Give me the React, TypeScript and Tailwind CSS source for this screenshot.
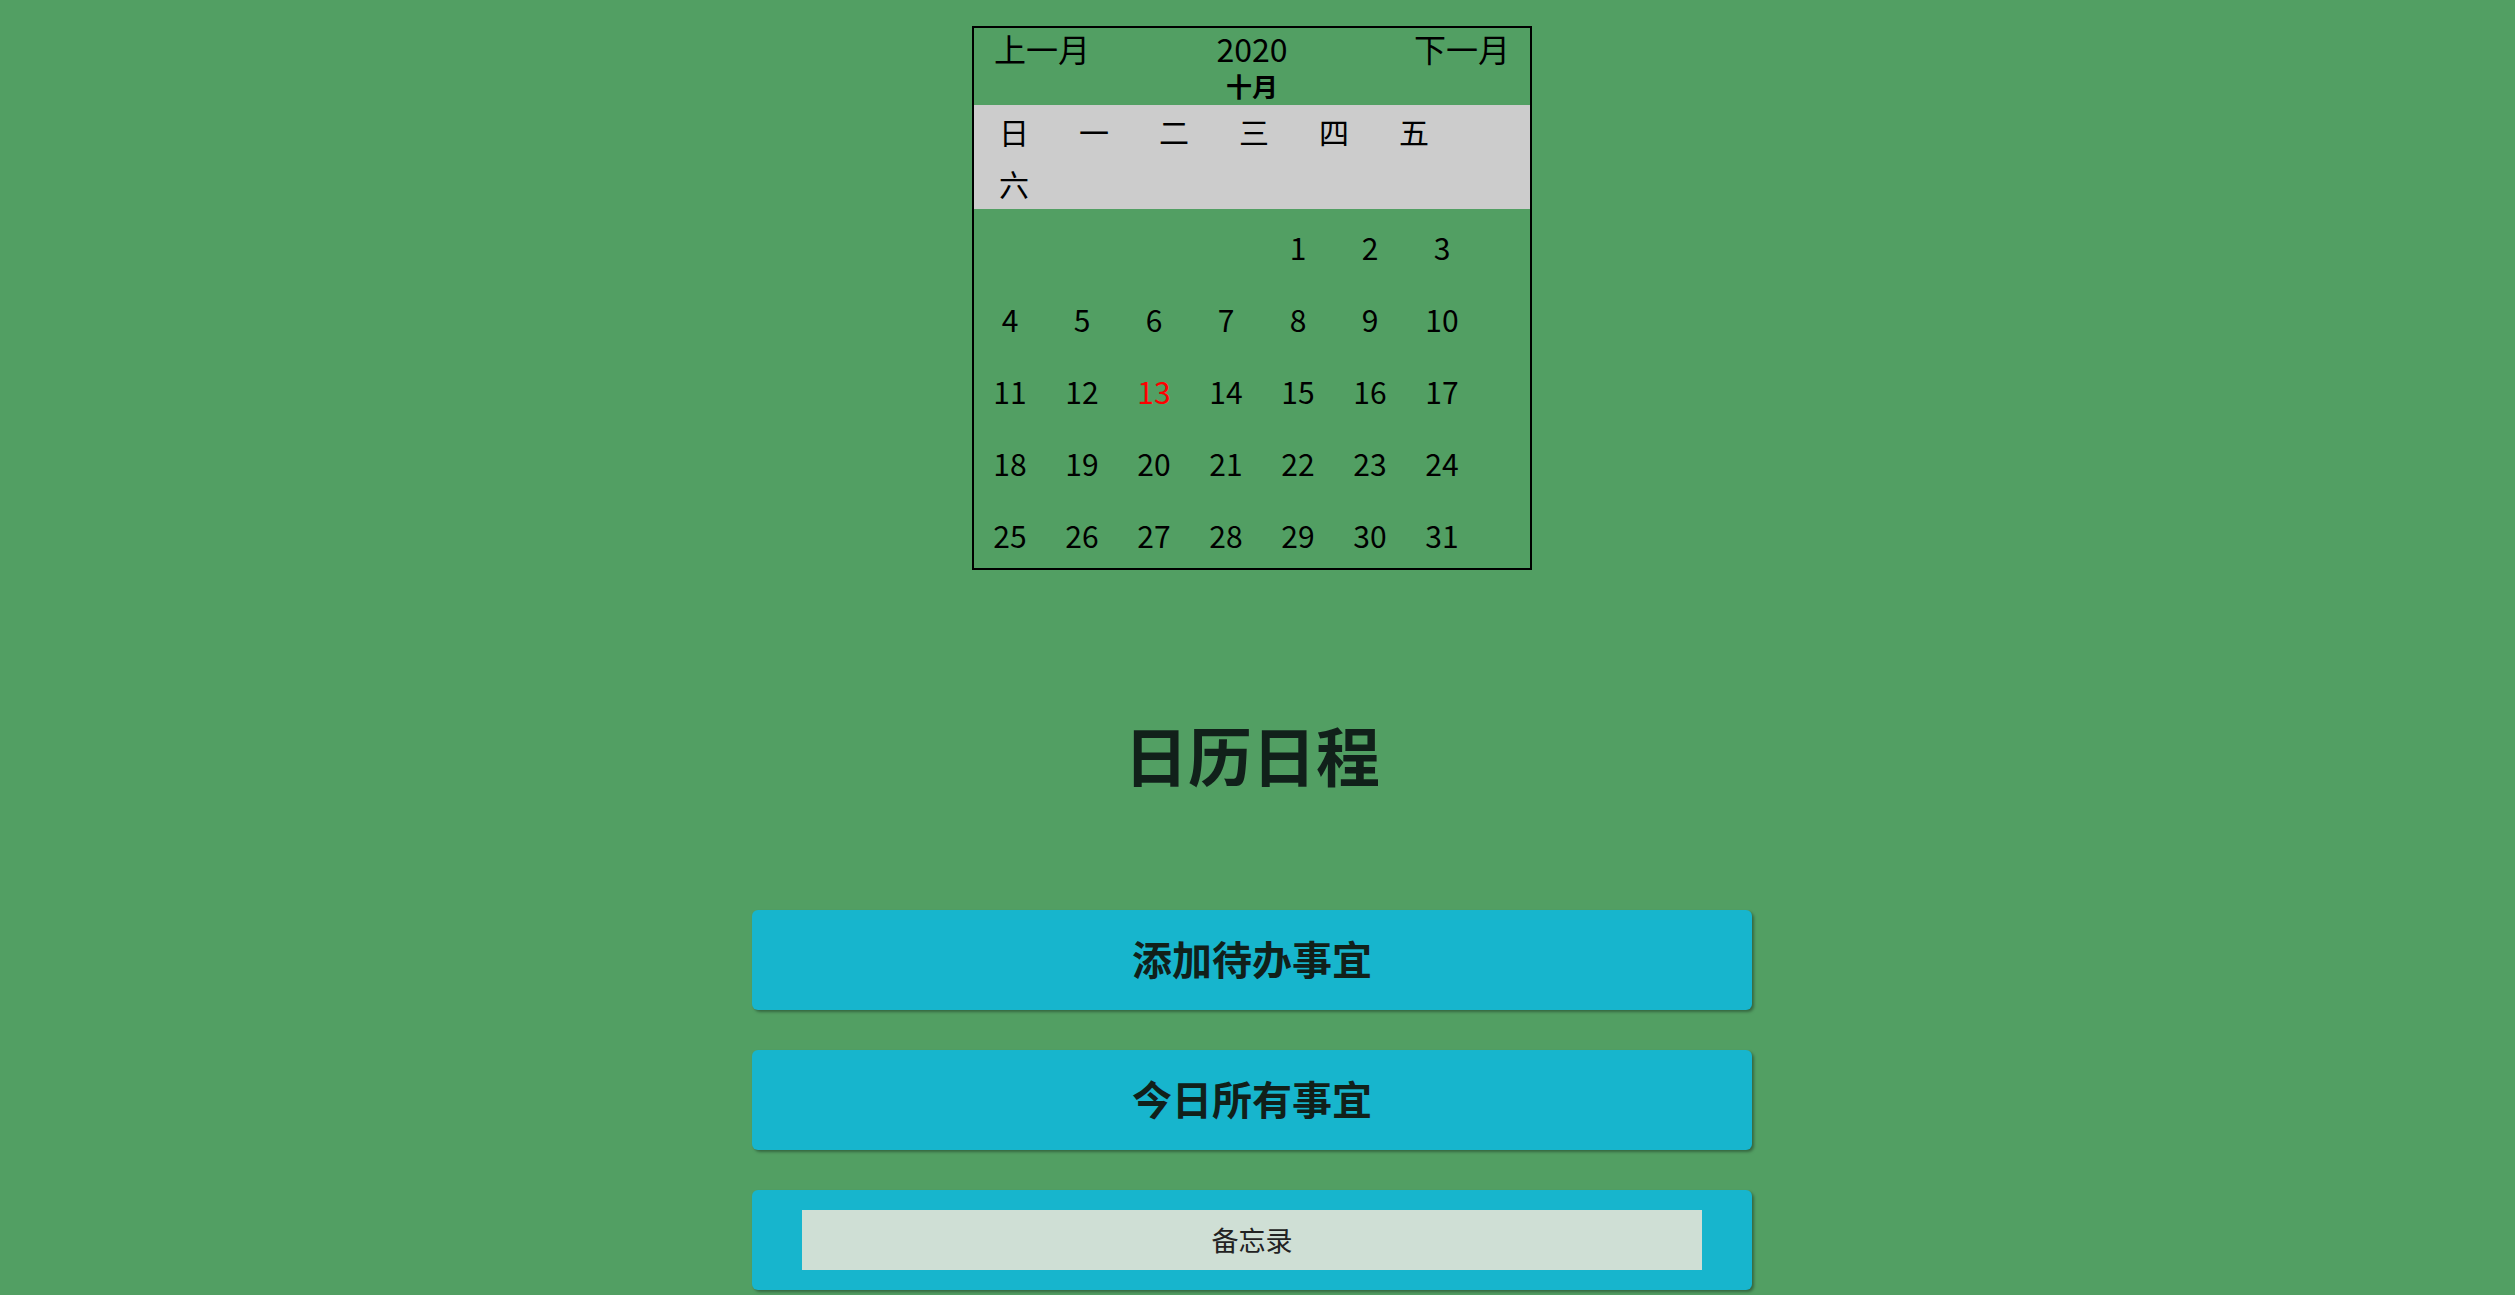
const weekdays = ["日", "一", "二", "三", "四", "五", "六"];

// October 2020 starts on Thursday
const cells: (number | null)[] = [null, null, null, null, ...Array.from({ length: 31 }, (_, i) => i + 1)];

const Calendar = () => {
    return (
        <div className="w-[560px] border-2 border-black text-black">
            <div className="h-[77px] px-[20px]">
                <div className="flex items-center justify-between h-[40px] text-[32px] leading-[40px]">
                    <a className="cursor-pointer">上一月</a>
                    <span>2020</span>
                    <a className="cursor-pointer">下一月</a>
                </div>
                <div className="text-center text-[26px] leading-[36px] font-bold">十月</div>
            </div>
            <ul className="bg-[#cccccc] flex flex-wrap h-[104px]">
                {weekdays.map((d) => (
                    <li key={d} className="w-[80px] h-[52px] flex items-center justify-center text-[30px]">
                        {d}
                    </li>
                ))}
            </ul>
            <ul className="grid grid-cols-[repeat(7,72px)] content-start h-[359px] pt-[2px]">
                {cells.map((n, i) => (
                    <li
                        key={i}
                        className={`h-[72px] flex items-center justify-center text-[30px] ${n === 13 ? "text-[#ff0000]" : ""}`}
                    >
                        {n ?? ""}
                    </li>
                ))}
            </ul>
        </div>
    );
};

const App = () => {
    return (
        <div
            className="min-h-screen bg-[#529f63] flex flex-col items-center pr-[11px] pt-[26px]"
            style={{ fontFamily: '"Noto Sans CJK SC", "Noto Sans", sans-serif' }}
        >
            <Calendar />
            <h1 className="mt-[143px] h-[80px] leading-[80px] text-[64px] font-bold text-[#11201a]">日历日程</h1>
            <div className="mt-[117px] flex flex-col gap-[40px]">
                <button className="w-[1000px] h-[100px] pb-[5px] bg-[#17b5cd] rounded-md shadow-[2px_2px_3px_rgba(0,0,0,0.35)] text-[40px] font-bold text-[#11201a]">
                    添加待办事宜
                </button>
                <button className="w-[1000px] h-[100px] pb-[5px] bg-[#17b5cd] rounded-md shadow-[2px_2px_3px_rgba(0,0,0,0.35)] text-[40px] font-bold text-[#11201a]">
                    今日所有事宜
                </button>
                <div className="w-[1000px] h-[100px] bg-[#17b5cd] rounded-md shadow-[2px_2px_3px_rgba(0,0,0,0.35)] flex items-center justify-center">
                    <div className="w-[900px] h-[60px] bg-[#cfdfd5] flex items-center justify-center text-[27px] text-[#222222]">
                        备忘录
                    </div>
                </div>
            </div>
        </div>
    );
};

export default App;
